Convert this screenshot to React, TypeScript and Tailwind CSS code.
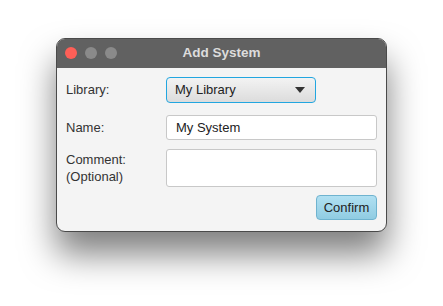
import React from "react";

export default function App() {
  return (
    <div className="w-[443px] h-[306px] bg-white overflow-hidden" style={{ fontFamily: '"Liberation Sans", Arial, sans-serif' }}>
      <div className="pt-[38px] pl-[56px]">
        <div className="w-[331px] h-[194px] rounded-[9px] overflow-hidden bg-[#f4f4f4] border border-[#4a4a4a] shadow-[0_22px_34px_rgba(0,0,0,0.5)] flex flex-col">
          <div className="relative h-[29px] bg-[#616161] flex items-center justify-center shrink-0">
            <div className="absolute left-[8px] top-[8px] flex gap-[8px]">
              <span className="w-[12px] h-[12px] rounded-full bg-[#fe5f57]" />
              <span className="w-[12px] h-[12px] rounded-full bg-[#8a8a8a]" />
              <span className="w-[12px] h-[12px] rounded-full bg-[#8a8a8a]" />
            </div>
            <span className="text-[13.5px] font-bold text-[#dcdcdc]">Add System</span>
          </div>
          <div className="flex-1 grid grid-cols-[100px_1fr] pl-[9px] pr-[9px] pt-[9px] text-[13px] text-[#333] content-start">
            <div className="flex items-center h-[26px]">Library:</div>
            <div className="flex items-center h-[26px]">
              <div className="w-[150px] h-[26px] rounded-[4px] border-[1.5px] border-[#22a6e0] bg-gradient-to-b from-[#f3f3f3] to-[#dcdcdc] flex items-center justify-between pl-[8px] pr-[10px]">
                <span className="text-[#222]">My Library</span>
                <svg width="10" height="6" viewBox="0 0 10 6"><path d="M0 0h10L5 6z" fill="#333" /></svg>
              </div>
            </div>
            <div className="flex items-center h-[25px] mt-[12px]">Name:</div>
            <div className="flex items-center h-[25px] mt-[12px]">
              <div className="w-full h-[25px] rounded-[3px] border border-[#c8c8c8] bg-white flex items-center pl-[9px] text-[#222]">My System</div>
            </div>
            <div className="mt-[9px] leading-[17px] pt-[2px]">Comment:<br />(Optional)</div>
            <div className="mt-[9px]">
              <div className="w-full h-[38px] rounded-[3px] border border-[#c8c8c8] bg-white" />
            </div>
            <div />
            <div className="flex justify-end mt-[8px]">
              <div className="w-[61px] h-[25px] rounded-[4px] border border-[#6fb3cf] bg-gradient-to-b from-[#b0e0f2] to-[#90cce2] flex items-center justify-center text-[#222]">Confirm</div>
            </div>
          </div>
        </div>
      </div>
    </div>
  );
}
